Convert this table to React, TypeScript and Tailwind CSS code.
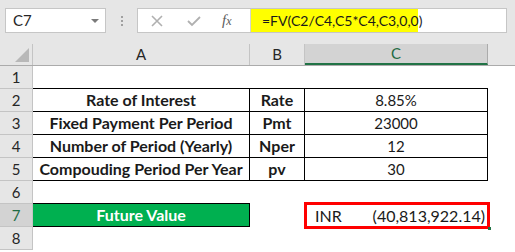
import React from 'react';

type Row = {
  n: number;
  a?: string;
  b?: string;
  c?: string;
};

const rows: Row[] = [
  { n: 1 },
  { n: 2, a: 'Rate of Interest', b: 'Rate', c: '8.85%' },
  { n: 3, a: 'Fixed Payment Per Period', b: 'Pmt', c: '23000' },
  { n: 4, a: 'Number of Period (Yearly)', b: 'Nper', c: '12' },
  { n: 5, a: 'Compouding Period Per Year', b: 'pv', c: '30' },
  { n: 6 },
  { n: 7 },
  { n: 8 },
];

const RowHead = ({ n, selected }: { n: number; selected?: boolean }) => (
  <div
    className={
      'w-[33px] shrink-0 h-full flex items-center justify-center border-r border-b border-[#c4c4c4] text-[15px] ' +
      (selected ? 'bg-[#d3d3d3] text-[#1f6b43]' : 'bg-[#e6e6e6] text-[#262626]')
    }
  >
    {n}
  </div>
);

const App = () => {
  return (
    <div
      className="w-[515px] h-[252px] overflow-hidden bg-white text-[14px] text-[#1a1a1a]"
      style={{ fontFamily: 'Lato, "Liberation Sans", sans-serif' }}
    >
      {/* formula bar */}
      <div className="h-[44px] bg-[#e6e6e6] pt-[8px] flex items-start">
        <div className="ml-[5px] w-[101px] h-[25px] bg-white border border-[#c6c6c6] flex items-center justify-between pl-[7px] pr-[6px]">
          <span className="text-[15px] text-[#262626]">C7</span>
          <span className="w-0 h-0 border-l-[4px] border-r-[4px] border-t-[4px] border-l-transparent border-r-transparent border-t-[#7a7a7a]" />
        </div>
        <div className="w-[31px] h-[25px] flex flex-col items-center justify-center gap-[2px]">
          <span className="w-[2px] h-[2px] bg-[#a0a0a0]" />
          <span className="w-[2px] h-[2px] bg-[#a0a0a0]" />
          <span className="w-[2px] h-[2px] bg-[#a0a0a0]" />
        </div>
        <div className="flex-1 mr-[8px] h-[25px] bg-white border border-[#c6c6c6] flex">
          <div className="w-[113px] shrink-0 flex items-center border-r border-[#d4d4d4]">
            <svg width="14" height="14" viewBox="0 0 14 14" className="ml-[12px]">
              <path d="M2 2 L12 12 M12 2 L2 12" stroke="#b0b0b0" strokeWidth="1.6" />
            </svg>
            <svg width="16" height="14" viewBox="0 0 16 14" className="ml-[22px]">
              <path d="M2 7 L6 11 L14 3" stroke="#b0b0b0" strokeWidth="1.8" fill="none" />
            </svg>
            <span
              className="ml-[20px] italic text-[15px] text-[#5c5c5c]"
              style={{ fontFamily: '"Liberation Serif", serif' }}
            >
              f<span className="text-[12px]">x</span>
            </span>
          </div>
          <div className="flex-1 flex">
            <div className="bg-[#ffff00] w-[167px] h-full flex items-center pl-[11px] text-[14px] text-[#1a1a1a]">
              =FV(C2/C4,C5*C4,C3,0,0)
            </div>
          </div>
        </div>
      </div>

      {/* column headers */}
      <div className="h-[22px] flex bg-[#e6e6e6] text-[15px] text-[#262626] border-b border-[#ababab]">
        <div className="w-[33px] shrink-0 relative border-r border-[#c4c4c4]">
          <svg width="14" height="14" viewBox="0 0 14 14" className="absolute right-[3px] bottom-[3px]">
            <path d="M14 0 L14 14 L0 14 Z" fill="#b8b8b8" />
          </svg>
        </div>
        <div className="w-[217px] shrink-0 flex items-center justify-center border-r border-[#c4c4c4]">A</div>
        <div className="w-[55px] shrink-0 flex items-center justify-center border-r border-[#c4c4c4]">B</div>
        <div className="w-[183px] shrink-0 flex items-center justify-center bg-[#d3d3d3] text-[#1f6b43] border-b-2 border-[#217346] border-r border-r-[#ababab]">
          C
        </div>
        <div className="flex-1" />
      </div>

      {/* rows */}
      {rows.map((r) => {
        const table = r.n >= 2 && r.n <= 5;
        const topOfTable = r.n === 1;
        if (r.n === 7) {
          return (
            <div key={r.n} className="h-[23px] flex">
              <RowHead n={r.n} selected />
              <div className="w-[217px] shrink-0 bg-[#00b050] border-r border-b border-black flex items-center justify-center font-bold text-white text-[16px]">
                Future Value
              </div>
              <div className="w-[55px] shrink-0" />
              <div className="w-[183px] shrink-0 relative flex items-center justify-between pl-[10px] pr-[3px] text-[16px]">
                <span>INR</span>
                <span>(40,813,922.14)</span>
                <div className="absolute left-[-1px] right-[-2px] top-[-2px] bottom-[-2px] border-[3px] border-[#ff0000]" />
                <div className="absolute right-[-3px] bottom-[-3px] w-[3px] h-[3px] bg-[#217346]" />
              </div>
            </div>
          );
        }
        return (
          <div key={r.n} className="h-[23px] flex">
            <RowHead n={r.n} />
            <div
              className={
                'w-[217px] shrink-0 flex items-center justify-center font-bold text-[16px] ' +
                (table ? 'border-r border-b border-black ' : '') +
                (topOfTable || r.n === 6 ? 'border-b border-black' : '')
              }
            >
              {r.a}
            </div>
            <div
              className={
                'w-[55px] shrink-0 flex items-center justify-center font-bold text-[16px] ' +
                (table ? 'border-r border-b border-black ' : '') +
                (topOfTable ? 'border-b border-black' : '')
              }
            >
              {r.b}
            </div>
            <div
              className={
                'w-[183px] shrink-0 flex items-center justify-center text-[15px] ' +
                (table ? 'border-r border-b border-black ' : '') +
                (topOfTable ? 'border-b border-black' : '')
              }
            >
              {r.c}
            </div>
            <div className="flex-1" />
          </div>
        );
      })}
    </div>
  );
};

export default App;
